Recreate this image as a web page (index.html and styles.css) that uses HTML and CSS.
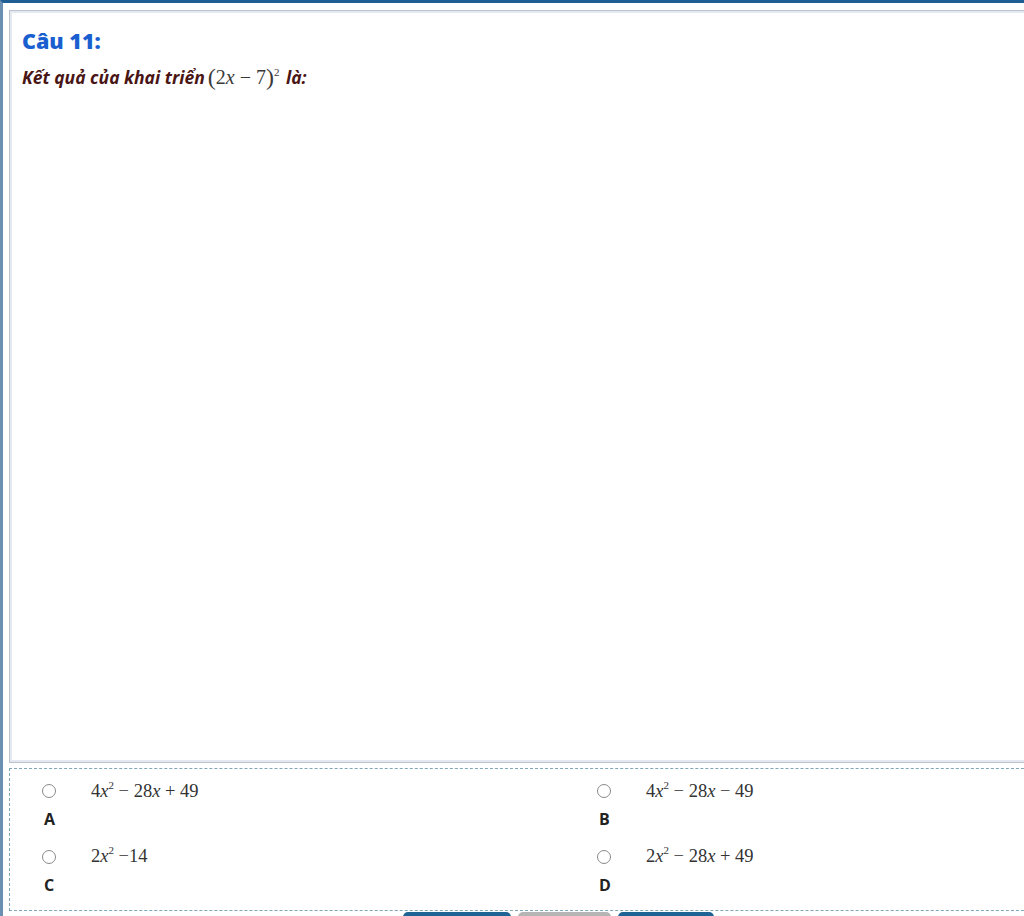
FILE: index.html
```html
<!DOCTYPE html>
<html lang="vi">
<head>
    <meta charset="UTF-8">
    <meta name="viewport" content="width=device-width, initial-scale=1.0">
    <title>Câu 11</title>
    <link rel="stylesheet" href="styles.css">
</head>
<body>
    <div class="frame">
        <div class="question-panel">
            <div class="question-title">Câu 11:</div>
            <div class="question-text">
                Kết quả của khai triển<span class="math"><span class="paren">(</span>2<i>x</i> − 7<span class="paren">)</span><sup>2</sup></span> là:
            </div>
        </div>

        <div class="answers">
            <label class="answer">
                <span class="answer-row">
                    <span class="radio"></span>
                    <span class="math">4<i>x</i><sup>2</sup> − 28<i>x</i> + 49</span>
                </span>
                <span class="answer-letter">A</span>
            </label>
            <label class="answer">
                <span class="answer-row">
                    <span class="radio"></span>
                    <span class="math">4<i>x</i><sup>2</sup> − 28<i>x</i> − 49</span>
                </span>
                <span class="answer-letter">B</span>
            </label>
            <label class="answer">
                <span class="answer-row">
                    <span class="radio"></span>
                    <span class="math">2<i>x</i><sup>2</sup> −14</span>
                </span>
                <span class="answer-letter">C</span>
            </label>
            <label class="answer">
                <span class="answer-row">
                    <span class="radio"></span>
                    <span class="math">2<i>x</i><sup>2</sup> − 28<i>x</i> + 49</span>
                </span>
                <span class="answer-letter">D</span>
            </label>
        </div>

        <div class="nav-buttons">
            <span class="nav-btn"></span>
            <span class="nav-btn gray"></span>
            <span class="nav-btn last"></span>
        </div>
    </div>
</body>
</html>
```

FILE: styles.css
```css
* {
    box-sizing: border-box;
    margin: 0;
    padding: 0;
}

body {
    background: #ffffff;
    overflow: hidden;
    font-family: 'Open Sans', 'Noto Sans', sans-serif;
}

.frame {
    height: 916px;
    border-top: 3px solid #1f5f94;
    border-left: 3px solid #6b8fb1;
    padding: 7px 0 0 6px;
    background: #ffffff;
    overflow: hidden;
    position: relative;
}

.question-panel {
    width: 1040px;
    height: 753px;
    border: 1px solid #b9c2cd;
    box-shadow: inset 2px 2px 0 #e4e9ef, inset -2px -2px 0 #e4e9ef;
    padding: 15px 12px 0 12px;
}

.question-title {
    color: #1a5fd0;
    font-weight: 800;
    font-size: 21.5px;
    line-height: 30px;
}

.question-text {
    color: #4a1515;
    font-size: 17.5px;
    font-style: italic;
    font-weight: 700;
    line-height: 30px;
    margin-top: 5px;
}

.math {
    font-family: 'Liberation Serif', 'Times New Roman', serif;
    font-style: normal;
    font-weight: 400;
    font-size: 18.5px;
    color: #333333;
}

.question-text .math {
    color: #3a3a3a;
    font-size: 20px;
    margin-left: 3px;
    margin-right: 2px;
}

.math i {
    font-style: italic;
}

.math sup {
    font-size: 11px;
    vertical-align: 8px;
    line-height: 0;
}

.paren {
    font-size: 24px;
    display: inline-block;
    transform: translateY(1px);
}

.answers {
    width: 1040px;
    height: 143px;
    margin-top: 5px;
    border: 1px dashed #7fa7b8;
    display: grid;
    grid-template-columns: 555px 1fr;
    padding: 10px 0 0 32px;
    row-gap: 0;
}

.answer {
    display: flex;
    flex-direction: column;
    gap: 5px;
}

.answer-row {
    display: flex;
    align-items: center;
    gap: 35px;
    height: 24px;
}

.radio {
    width: 14px;
    height: 14px;
    border-radius: 50%;
    border: 1px solid #8a8a8a;
    background: #ffffff;
    flex-shrink: 0;
}

.answer-letter {
    font-weight: 700;
    font-size: 16px;
    color: #222222;
    line-height: 22px;
    padding-left: 2px;
}

.nav-buttons {
    display: flex;
    gap: 7px;
    padding-left: 394px;
    margin-top: 1px;
}

.nav-btn {
    width: 108px;
    height: 12px;
    border-radius: 5px 5px 0 0;
    background: #1d6394;
}

.nav-btn.gray {
    width: 93px;
    background: #b5b5b5;
}

.nav-btn.last {
    width: 96px;
}
```
